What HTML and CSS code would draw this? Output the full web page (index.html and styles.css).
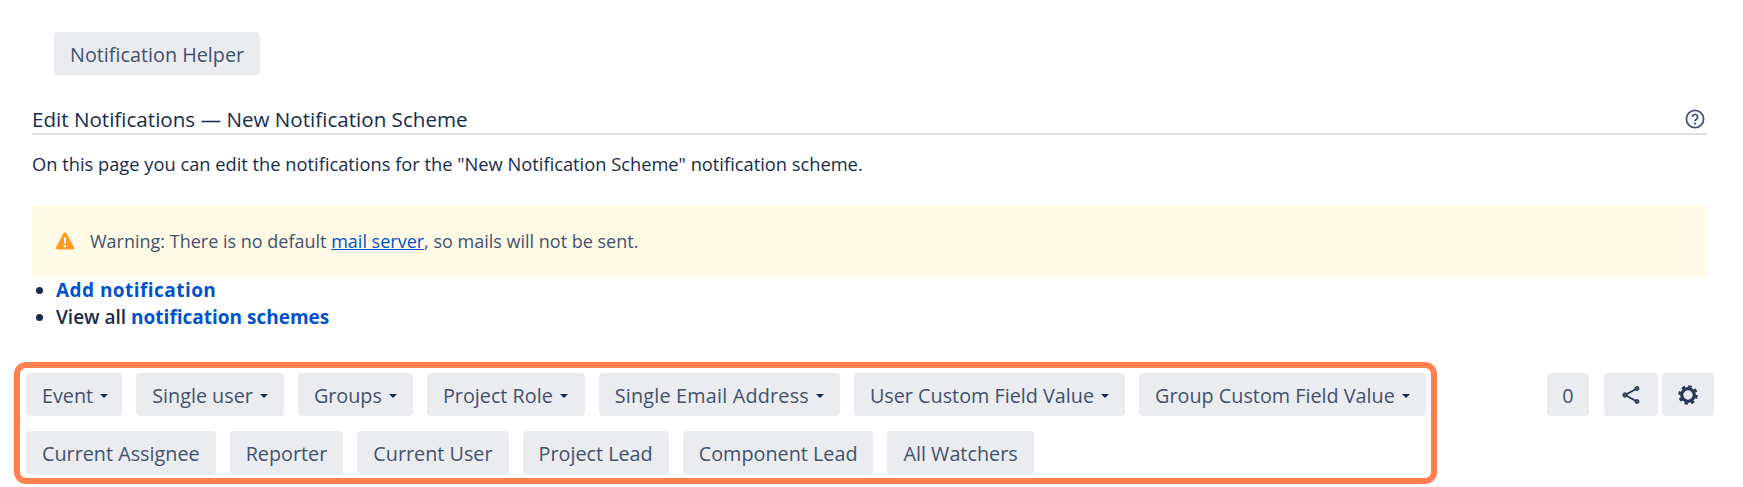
FILE: index.html
```html
<!DOCTYPE html>
<html lang="en">
<head>
<meta charset="utf-8">
<title>Edit Notifications</title>
<link rel="stylesheet" href="styles.css">
</head>
<body>
<div class="page">
  <div class="helper-row"><button class="btn">Notification Helper</button></div>
  <div class="content">
    <div class="title-row">
      <h2 class="title">Edit Notifications — New Notification Scheme</h2>
      <svg class="help" viewBox="0 0 20 20" aria-hidden="true"><circle cx="10" cy="10" r="8.6" fill="none" stroke="#42526e" stroke-width="1.8"/><path d="M7.4 8a2.6 2.6 0 1 1 4 2.2c-.9.6-1.4 1-1.4 2" fill="none" stroke="#42526e" stroke-width="1.8"/><circle cx="10" cy="14.7" r="1.1" fill="#42526e"/></svg>
    </div>
    <p class="intro">On this page you can edit the notifications for the "New Notification Scheme" notification scheme.</p>
    <div class="warning">
      <svg class="warn-icon" viewBox="0 0 20 20" aria-hidden="true"><path d="M10 1.5c.7 0 1.2.4 1.6 1l7.3 13.6c.6 1.2-.1 2.4-1.5 2.4H2.600c-1.400 0-2.100-1.200-1.500-2.400L8.400 2.500c.4-.6.900-1 1.600-1z" fill="#ff991f"/><rect x="9" y="6" width="2" height="6.500" rx="1" fill="#fff"/><circle cx="10" cy="15" r="1.200" fill="#fff"/></svg>
      <span>Warning: There is no default <a class="plain-link" href="#">mail server</a>, so mails will not be sent.</span>
    </div>
    <ul class="actions">
      <li><a class="strong-link add-link" href="#">Add notification</a></li>
      <li>View all <a class="strong-link" href="#">notification schemes</a></li>
    </ul>
  </div>
  <div class="toolbar">
    <div class="palette">
      <div class="row">
        <button class="btn btn-tight">Event<i class="caret"></i></button>
        <button class="btn">Single user<i class="caret"></i></button>
        <button class="btn">Groups<i class="caret"></i></button>
        <button class="btn btn-roomy">Project Role<i class="caret"></i></button>
        <button class="btn btn-spaced">Single Email Address<i class="caret"></i></button>
        <button class="btn">User Custom Field Value<i class="caret"></i></button>
        <button class="btn">Group Custom Field Value<i class="caret"></i></button>
      </div>
      <div class="row">
        <button class="btn">Current Assignee</button>
        <button class="btn">Reporter</button>
        <button class="btn">Current User</button>
        <button class="btn">Project Lead</button>
        <button class="btn">Component Lead</button>
        <button class="btn">All Watchers</button>
      </div>
    </div>
    <div class="side">
      <button class="btn count">0</button>
      <div class="pair">
        <button class="btn icon-btn"><svg viewBox="0 0 20 20" aria-hidden="true"><path d="M16 3.500 4 10l12 6.500" fill="none" stroke="#253858" stroke-width="1.800"/><circle cx="16" cy="3.500" r="2" fill="#42526e" stroke="#253858" stroke-width="1"/><circle cx="4" cy="10" r="2.200" fill="#42526e" stroke="#253858" stroke-width="1"/><circle cx="16" cy="16.500" r="2" fill="#42526e" stroke="#253858" stroke-width="1"/></svg></button>
        <button class="btn icon-btn gear-btn"><svg viewBox="0 0 20 20" aria-hidden="true"><circle cx="10" cy="10" r="6.300" fill="none" stroke="#253858" stroke-width="3.200"/><circle cx="10" cy="10" r="8.600" fill="none" stroke="#253858" stroke-width="2.400" stroke-dasharray="3.500 3.250"/></svg></button>
      </div>
    </div>
  </div>
</div>
</body>
</html>
```
FILE: styles.css
```css
* { box-sizing: border-box; }
html, body { margin: 0; padding: 0; background: #fff; }
body { font-family: "Open Sans", "Liberation Sans", sans-serif; color: #172b4d; overflow: hidden; }
.page { width: 1743px; height: 487px; padding-top: 32px; }
.btn {
  height: 43px; padding: 2px 16px 0; border: 0; border-radius: 4px;
  background: #ebecf0; color: #42526e;
  font: 400 19.800px/41px "Open Sans", "Liberation Sans", sans-serif;
  white-space: nowrap; display: inline-flex; align-items: center;
}
.btn-tight { padding-right: 14px; }
.btn-roomy { padding-right: 17px; }
.btn-spaced { letter-spacing: .2px; }
.helper-row { padding-left: 54px; }
.content { margin: 0 36px 0 32px; }
.title-row { display: flex; justify-content: space-between; align-items: flex-start; height: 38px; margin-top: 22px; padding-top: 10px; border-bottom: 2px solid #dfe1e6; padding-right: 2px; }
.title { margin: 0; font-size: 20.600px; font-weight: 400; line-height: 24px; color: #172b4d; }
.help { width: 20px; height: 20px; margin-top: 2px; }
.intro { margin: 0; font-size: 18.300px; line-height: 22px; padding-top: 18px; height: 70px; color: #172b4d; }
.warning { display: flex; align-items: center; gap: 15px; height: 72px; padding-left: 23px; background: #fffae6; border-radius: 4px; font-size: 18px; color: #42526e; }
.warn-icon { width: 20px; height: 20px; }
.plain-link { color: #0052cc; text-decoration: underline; }
.actions { margin: 0; padding: 0 0 0 24px; font-size: 19px; font-weight: 600; line-height: 27px; color: #172b4d; }
.strong-link { color: #0052cc; font-weight: 700; text-decoration: none; }
.add-link { letter-spacing: .45px; }
.toolbar { display: flex; justify-content: space-between; align-items: flex-start; margin-top: 31px; padding: 0 29px 0 14px; }
.palette { width: 1423px; height: 122px; border: 6px solid #ff7f50; border-radius: 12px; padding: 5px 0 0 6px; display: flex; flex-direction: column; gap: 15px; }
.row { display: flex; gap: 14px; }
.caret { display: inline-block; margin-left: 7px; border: 4px solid transparent; border-top-color: #172b4d; border-bottom: 0; }
.side { display: flex; gap: 15px; padding-top: 11px; }
.pair { display: flex; gap: 4px; }
.count { width: 42px; justify-content: center; padding: 2px 0 0; }
.icon-btn { width: 54px; justify-content: center; padding: 0; }
.gear-btn { width: 52px; }
.icon-btn svg { width: 20px; height: 20px; }
```
